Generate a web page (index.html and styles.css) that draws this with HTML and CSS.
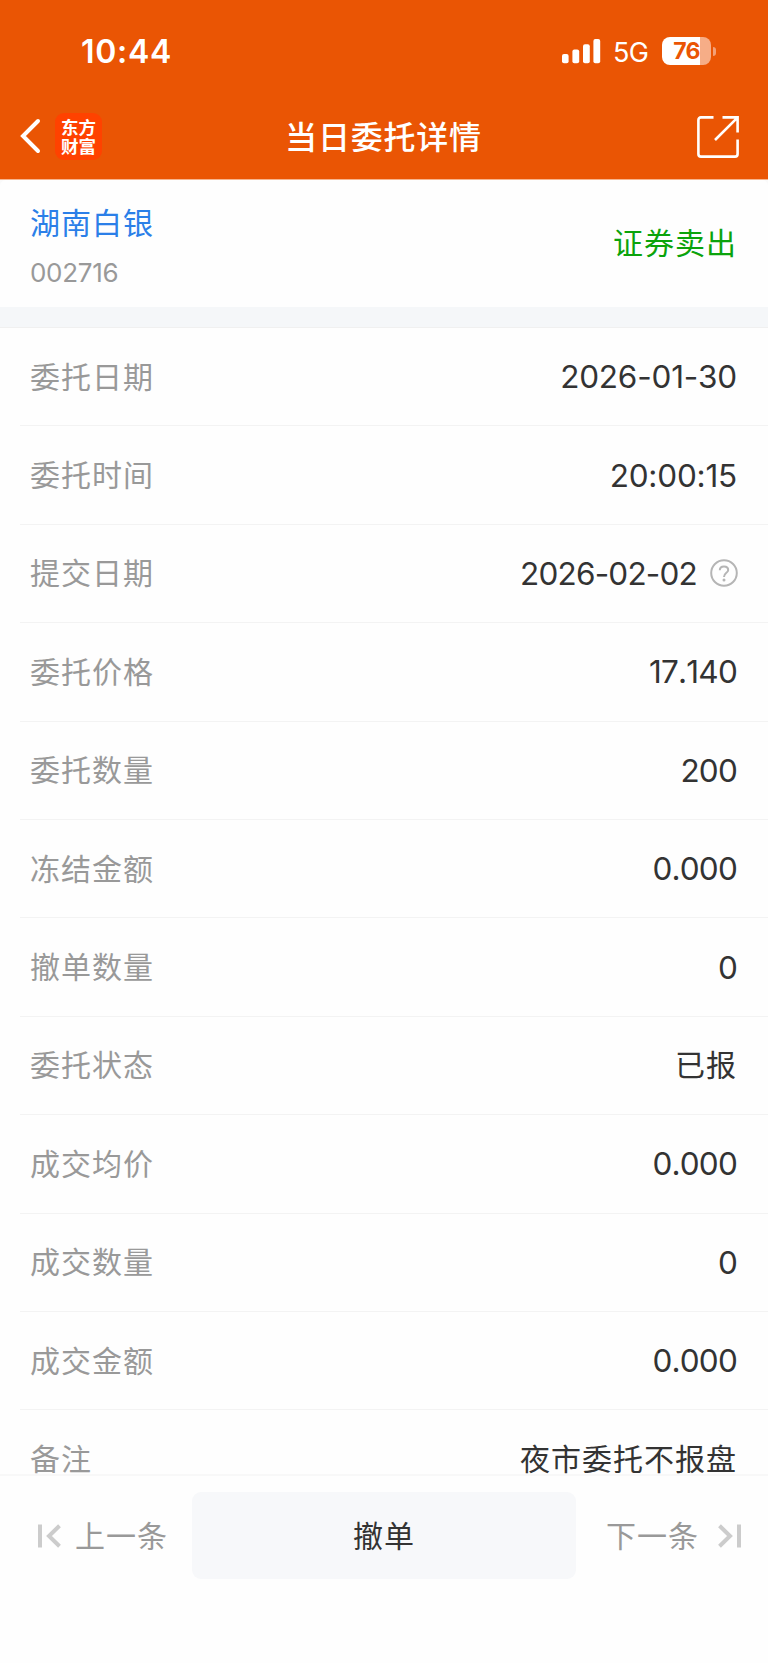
FILE: index.html
```html
<!DOCTYPE html>
<html lang="zh-CN">
<head>
    <meta charset="UTF-8">
    <meta name="viewport" content="width=device-width, initial-scale=1.0">
    <title>当日委托详情</title>
    <link rel="stylesheet" href="styles.css">
</head>
<body>
    <div class="page">
        <header class="header">
            <div class="status-bar">
                <span class="time">10:44</span>
                <div class="status-right">
                    <svg class="signal" width="39" height="25" viewBox="0 0 39 25" fill="#fff">
                        <rect x="0" y="15" width="6.6" height="9.3" rx="2"/>
                        <rect x="10.4" y="10.6" width="6.8" height="13.7" rx="2"/>
                        <rect x="21" y="5.2" width="6.8" height="19.1" rx="2"/>
                        <rect x="31.4" y="0" width="6.8" height="24.3" rx="2"/>
                    </svg>
                    <span class="network">5G</span>
                    <div class="battery"><span class="battery-level">76</span></div>
                    <span class="battery-cap"></span>
                </div>
            </div>
            <nav class="nav">
                <div class="nav-left">
                    <svg width="21" height="36" viewBox="0 0 21 36" fill="none" stroke="#fff" stroke-width="4" stroke-linecap="round" stroke-linejoin="miter">
                        <path d="M18 3L3 18L18 33"/>
                    </svg>
                    <div class="logo">东方<br>财富</div>
                </div>
                <h1 class="title">当日委托详情</h1>
                <svg class="share" width="42" height="42" viewBox="0 0 42 42" fill="none" stroke="#fff" stroke-width="2.6">
                    <path d="M16.5 1.4H4Q1.4 1.4 1.4 4V38Q1.4 40.6 4 40.6H38Q40.6 40.6 40.6 38V23.5"/>
                    <path d="M25.5 1.4H40.6V16.5M40.2 1.8L18 24"/>
                </svg>
            </nav>
        </header>

        <main class="content">
            <section class="stock">
                <div>
                    <div class="stock-name">湖南白银</div>
                    <div class="stock-code">002716</div>
                </div>
                <div class="direction">证券卖出</div>
            </section>
            <section class="list">
                <div class="row"><span class="label">委托日期</span><span class="value wide">2026-01-30</span></div>
                <div class="row"><span class="label">委托时间</span><span class="value wide">20:00:15</span></div>
                <div class="row">
                    <span class="label">提交日期</span>
                    <span class="value">2026-02-02</span>
                    <svg class="help" width="28" height="28" viewBox="0 0 28 28" fill="none" stroke="#b5b5b5" stroke-width="2">
                        <circle cx="14" cy="14" r="12.8"/>
                        <path d="M9.8 11.2C9.8 8.8 11.5 7.4 14 7.4S18.2 8.9 18.2 11C18.2 14 14 13.8 14 18"/>
                        <circle cx="14" cy="21" r="1.5" fill="#b5b5b5" stroke="none"/>
                    </svg>
                </div>
                <div class="row"><span class="label">委托价格</span><span class="value">17.140</span></div>
                <div class="row"><span class="label">委托数量</span><span class="value">200</span></div>
                <div class="row"><span class="label">冻结金额</span><span class="value">0.000</span></div>
                <div class="row"><span class="label">撤单数量</span><span class="value">0</span></div>
                <div class="row"><span class="label">委托状态</span><span class="value text">已报</span></div>
                <div class="row"><span class="label">成交均价</span><span class="value">0.000</span></div>
                <div class="row"><span class="label">成交数量</span><span class="value">0</span></div>
                <div class="row"><span class="label">成交金额</span><span class="value">0.000</span></div>
                <div class="row"><span class="label">备注</span><span class="value text">夜市委托不报盘</span></div>
            </section>
        </main>

        <footer class="footer">
            <div class="pager prev">
                <svg width="24" height="24" viewBox="0 0 24 24" fill="none" stroke="#ccc" stroke-width="4">
                    <path d="M2 .5V23.5M21.5 1.8L11 12L21.5 22.2"/>
                </svg>
                <span>上一条</span>
            </div>
            <button class="cancel">撤单</button>
            <div class="pager next">
                <span>下一条</span>
                <svg width="24" height="24" viewBox="0 0 24 24" fill="none" stroke="#ccc" stroke-width="4">
                    <path d="M22 .5V23.5M2.5 1.8L13 12L2.5 22.2"/>
                </svg>
            </div>
        </footer>
    </div>
</body>
</html>
```
FILE: styles.css
```css
* {
    box-sizing: border-box;
}
body {
    margin: 0;
    font-family: Inter, "Noto Sans CJK SC", sans-serif;
    background: #fefefe;
    color: #333;
}
svg {
    display: block;
    flex-shrink: 0;
}
.page {
    display: flex;
    flex-direction: column;
    height: 1663px;
    overflow: hidden;
}

/* header */
.header {
    flex: none;
    height: 180px;
    background: #ea5504;
    border-bottom: 1px solid #f6b48f;
    color: #fff;
}
.status-bar {
    display: flex;
    justify-content: space-between;
    align-items: center;
    height: 102px;
    padding: 0 52px 0 81px;
}
.time {
    padding-top: 1px;
    font-size: 32px;
    font-weight: 570;
    letter-spacing: 0.7px;
}
.status-right {
    display: flex;
    align-items: center;
}
.network {
    margin-left: 12px;
    font-size: 27px;
    letter-spacing: -0.8px;
    padding-top: 2px;
}
.battery {
    margin-left: 14px;
    width: 49px;
    height: 28px;
    border-radius: 8px;
    background: linear-gradient(to right, #fff 38px, #f6ad87 38px);
    text-align: center;
}
.battery-level {
    font-size: 23px;
    line-height: 28px;
    font-weight: 650;
    letter-spacing: -0.8px;
    color: #ea5504;
}
.battery-cap {
    width: 3px;
    height: 9px;
    margin-left: 2px;
    border-radius: 0 4px 4px 0;
    background: #f3a077;
}
.nav {
    display: grid;
    grid-template-columns: 1fr auto 1fr;
    align-items: center;
    height: 68px;
    padding: 0 29px 0 20px;
}
.nav-left {
    display: flex;
    align-items: center;
    gap: 14px;
}
.logo {
    width: 47px;
    height: 47px;
    padding-top: 4px;
    border-radius: 9px;
    background: #ff4200;
    font-family: "Noto Sans CJK SC", sans-serif;
    font-size: 17.5px;
    font-weight: 700;
    line-height: 19px;
    text-align: center;
}
.title {
    margin: 0;
    padding: 0 0 3px 8px;
    font-size: 32px;
    font-weight: 500;
    letter-spacing: 0.8px;
}
.share {
    justify-self: end;
    margin-top: 2px;
}

/* stock summary */
.content {
    flex: 1;
    min-height: 0;
    overflow: hidden;
    background: #fafafa;
}
.stock {
    display: flex;
    justify-content: space-between;
    align-items: center;
    height: 127px;
    padding: 3px 31px 0 30px;
    border-radius: 6px 6px 0 0;
    background: #fefefe;
    font-size: 30px;
    letter-spacing: 1px;
}
.stock-name {
    line-height: 44px;
    color: #2b7fe8;
}
.stock-code {
    margin-top: 12px;
    font-size: 26px;
    line-height: 32px;
    letter-spacing: -0.3px;
    color: #999;
}
.direction {
    padding-bottom: 9px;
    color: #0ba30b;
}

/* detail rows */
.list {
    border-top: 20px solid #f5f7f9;
    background: #fefefe;
}
.list::before {
    content: "";
    display: block;
    height: 1px;
    background: #f0f0f0;
}
.row {
    display: flex;
    align-items: center;
    height: 98.4px;
    margin-left: 20px;
    padding: 0 30px 0 10px;
    border-bottom: 1px solid #f3f3f3;
}
.label {
    margin-right: auto;
    padding-bottom: 4px;
    font-size: 30px;
    letter-spacing: 1px;
    color: #999;
}
.value {
    margin-right: 1px;
    font-size: 31.5px;
    font-kerning: none;
    letter-spacing: -0.8px;
}
.wide {
    letter-spacing: -0.2px;
}
.value.text {
    padding-bottom: 4px;
    font-size: 30px;
    letter-spacing: 1px;
}
.help {
    margin-left: 12px;
}

/* bottom bar */
.footer {
    flex: none;
    display: grid;
    grid-template-columns: 1fr 384px 1fr;
    align-items: start;
    height: 189px;
    padding-top: 16px;
    border-top: 2px solid #f8f8f8;
    background: #fefefe;
}
.pager {
    display: flex;
    align-items: center;
    height: 87px;
    font-size: 30px;
    letter-spacing: 1px;
    color: #999;
}
.pager span {
    padding-bottom: 4px;
}
.prev {
    padding-left: 38px;
    gap: 13px;
}
.next {
    justify-content: flex-end;
    padding-right: 27px;
    gap: 18px;
}
.cancel {
    height: 87px;
    padding-bottom: 5px;
    border: none;
    border-radius: 9px;
    background: #f7f8fa;
    font-family: inherit;
    font-size: 30px;
    letter-spacing: 1px;
    color: #333;
}
```
